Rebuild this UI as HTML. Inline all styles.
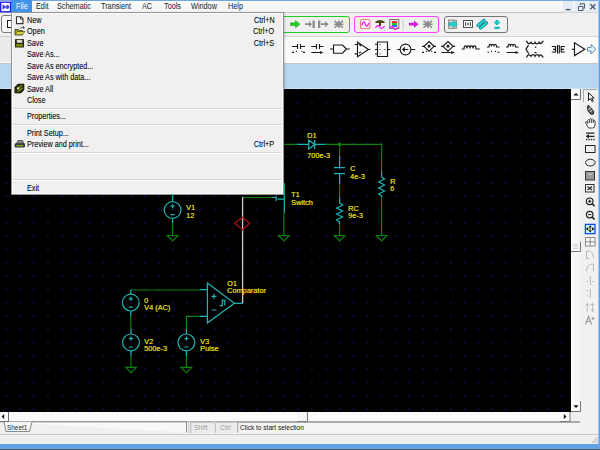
<!DOCTYPE html>
<html><head><meta charset="utf-8">
<style>
*{margin:0;padding:0;box-sizing:border-box}
html,body{width:600px;height:450px;overflow:hidden;background:#f0f0f0;font-family:"Liberation Sans",sans-serif}
.a{position:absolute}
.t{position:absolute;white-space:nowrap;transform-origin:0 0;transform:scaleX(.87);font-size:8.4px;line-height:10px;color:#1a1a1a}
#menubar{left:0;top:0;width:600px;height:13px;background:linear-gradient(#fafbfc,#f1f3f6);border-top:1px solid #74a7e0;border-bottom:1px solid #c4c4c4}
#tb1{left:0;top:13px;width:600px;height:23px;background:#f0f0f0}
#tb2{left:0;top:36px;width:598px;height:27px;background:#fbfbfb;border-top:1px solid #d4d4d4}
#band{left:0;top:63px;width:598px;height:26px;background:#b9d6f0;border-top:1px solid #c9c2bd;border-bottom:1px solid #cfe3f5}
#canvas{left:0;top:89px;width:571px;height:323px;background-color:#000;
 background-image:radial-gradient(circle,#0c0c3c 0.75px,transparent 1.2px);background-size:13.9px 13.3px;background-position:-0.65px -5.75px}
#vscroll{left:571px;top:89px;width:10px;height:323px;background:linear-gradient(90deg,#fff,#f8f8f8 25%,#f4f4f4)}
#palette{left:581px;top:89px;width:17px;height:345px;background:#f1f1f1}
#hscroll{left:0;top:412px;width:571px;height:10px;background:#fafafa}
#corner{left:571px;top:412px;width:10px;height:10px;background:#f0f0f0}
#tabbar{left:0;top:421px;width:580px;height:13px;background:#f0f0f0;border-top:1px solid #b0b0b0}
#status{left:0;top:434px;width:598px;height:10px;background:#efefef;border-top:1px solid #c9c9c9}
#taskbar{left:0;top:444px;width:600px;height:6px;background:#5fa2e6;border-bottom:1px solid #555}
#rframe{left:598px;top:0;width:2px;height:444px;background:linear-gradient(90deg,#a9cbee 50%,#5a9ee6 50%)}
.tbx{position:absolute;border-radius:3px;background:#f0f0f0}
#menu{left:10.5px;top:12px;width:273.5px;height:183px;background:#f0f0f0;border:1px solid rgba(0,0,0,.38);box-shadow:inset 0 0 0 1px #fbfbfb,1px 1px 2px rgba(0,0,0,.18)}
.m{font-size:8.6px;transform:scaleX(.84);color:#0a0a0a;text-shadow:.2px 0 0 rgba(0,0,0,.3)}
.sep{position:absolute;left:1px;right:1px;height:2px;border-top:1px solid #d7d7d7;border-bottom:1px solid #fff}
.l{position:absolute;white-space:nowrap;transform-origin:0 0;transform:scaleX(.92);font-size:8px;line-height:8px;color:#d8cc10;text-shadow:.35px 0 0 #d8cc10}
</style></head><body>
<div id="menubar" class="a">
 <svg class="a" style="left:0;top:-1px" width="12" height="14" viewBox="0 0 12 14"><rect x="0.7" y="2.2" width="9.8" height="9.6" fill="#fff" stroke="#1414e6" stroke-width="1.3"/><path d="M2.6 4L5.6 7L2.6 10Z" fill="#2a2af0"/><circle cx="7.3" cy="7" r="2" fill="#4848f0"/></svg>
 <div class="a" style="left:11px;top:-1px;width:20.5px;height:13px;background:#3f93e8;border-radius:1px"></div>
 <div class="t" style="left:15.5px;top:0px;color:#fff">File</div>
 <div class="t" style="left:36px;top:0px">Edit</div>
 <div class="t" style="left:57px;top:0px">Schematic</div>
 <div class="t" style="left:101px;top:0px">Transient</div>
 <div class="t" style="left:142px;top:0px">AC</div>
 <div class="t" style="left:164px;top:0px">Tools</div>
 <div class="t" style="left:191px;top:0px">Window</div>
 <div class="t" style="left:228px;top:0px">Help</div>
</div>
<div id="tb1" class="a"></div>
<div id="tb2" class="a"></div>
<div class="a" style="left:0;top:36px;width:12px;height:27px;background:#ebebeb;border-top:1px solid #cfcfcf;border-bottom:1.5px solid #fdfdfd"></div>
<div id="band" class="a"></div>
<div id="canvas" class="a"></div>
<div id="vscroll" class="a"></div>
<div id="palette" class="a"></div>
<div id="hscroll" class="a"></div>
<div id="corner" class="a"></div>
<div id="tabbar" class="a"></div>
<div id="status" class="a"></div>
<div id="taskbar" class="a"></div>
<div id="rframe" class="a"></div>

<!-- toolbar row1 boxes -->
<div class="tbx" style="left:1px;top:15px;width:40px;height:18px;border:1.5px solid #7a7a7a;background:#f8f8f8"></div>
<div class="tbx" style="left:200px;top:15.5px;width:150px;height:17.5px;border:1.4px solid #22cc22"></div>
<div class="tbx" style="left:354px;top:15.5px;width:85px;height:17.5px;border:1.4px solid #ff40ff"></div>
<div class="tbx" style="left:443.5px;top:15.5px;width:64.5px;height:17.5px;border:1.5px solid #767676"></div>



<svg class="a" style="left:0;top:0" width="600" height="100" viewBox="0 0 600 100">
<!-- left toolbar doc icon -->
<rect x="7.5" y="20.5" width="5" height="7" fill="#fff" stroke="#222" stroke-width="1"/>
<!-- green toolbar icons -->
<path d="M290.5 22.8H295.5V20.5L300 24.2L295.5 27.8V25.6H290.5Z" fill="#22d022" stroke="#119911" stroke-width=".5"/>
<g fill="#8c8c8c">
 <path d="M305 23.3H309V21L312 24.2L309 27.2V25H305Z"/><rect x="312.5" y="20.5" width="2.3" height="7.5"/>
 <rect x="318" y="20.5" width="2.3" height="7.5"/><path d="M321 23.3H325V21L328.5 24.2L325 27.2V25H321Z"/>
</g>
<path d="M334.5 20.8L343 27.6M343 20.8L334.5 27.6M338.8 20.5V28M334 24.2H343.5" stroke="#8c8c8c" stroke-width="1.6"/>
<!-- magenta toolbar -->
<rect x="360.5" y="19.5" width="9.5" height="9" rx="2" fill="#fff" stroke="#f07878" stroke-width="1.1"/>
<path d="M361.8 25.5C363 21 364.5 21 365.2 24S367.5 27.5 368.8 23" fill="none" stroke="#ff10ff" stroke-width="1.3"/>
<path d="M375.5 21.5Q380 18.5 384.5 21.5V23H381V26H379V23H375.5Z" fill="#4a4410"/>
<path d="M375.5 27.8C377 25 378.5 25 379.5 27S382.5 29 384.5 26" fill="none" stroke="#ff10ff" stroke-width="1.3"/>
<rect x="389.8" y="19.5" width="9" height="9" fill="#e8e8e8" stroke="#707070" stroke-width="1"/>
<rect x="392" y="21" width="5" height="2" fill="#f03030"/><rect x="392" y="23" width="5" height="2" fill="#30c030"/><rect x="392" y="25" width="5" height="2" fill="#3070f0"/>
<path d="M389.5 28.5C391 26 392.5 26 393.5 28S396.5 30 398.5 27" fill="none" stroke="#ff10ff" stroke-width="1.2"/>
<rect x="402.6" y="18.5" width=".9" height="12" fill="#c8c8c8"/>
<path d="M409 22.8H414V20.5L418.5 24.2L414 27.8V25.6H409Z" fill="#e010e0"/>
<path d="M423.5 20.8L432 27.6M432 20.8L423.5 27.6M427.8 20.5V28M423 24.2H432.5" stroke="#8c8c8c" stroke-width="1.6"/>
<!-- gray toolbar -->
<rect x="448.5" y="20" width="8" height="8.5" fill="#c8c8c8" stroke="#888" stroke-width=".8"/>
<path d="M449 22.8H453.5V20.5L457.5 24.2L453.5 27.8V25.6H449Z" fill="#10d8d8" stroke="#0a8a8a" stroke-width=".4"/>
<rect x="463.5" y="20.5" width="9" height="7" fill="#f4f4f4" stroke="#555" stroke-width="1"/>
<path d="M465.5 22V26M470.5 22V26" stroke="#333" stroke-width=".8"/><rect x="467.4" y="23.2" width="1.6" height="1.6" fill="#222"/>
<path d="M478 25.5L484 20.5M480.5 28L486.5 23" stroke="#0a6a6a" stroke-width="3.2" stroke-linecap="round"/><path d="M478 25.5L484 20.5M480.5 28L486.5 23" stroke="#18dede" stroke-width="2" stroke-linecap="round"/>
<path d="M494.5 22.5H499.5M497 20V25M494.5 27.8H499.5" stroke="#0a8a8a" stroke-width="2.2"/><path d="M494.5 22.5H499.5M497 20V25M494.5 27.8H499.5" stroke="#18d8d8" stroke-width="1.3"/>
<!-- MDI buttons -->
<g>
 <rect x="563" y="1" width="10.5" height="11.5" fill="#e3ebf4"/>
 <rect x="575" y="1" width="11.5" height="11.5" fill="#e3ebf4"/>
 <rect x="587.5" y="1" width="10.5" height="11.5" fill="#e3ebf4"/>
 <path d="M566 9.6H570.5" stroke="#4d5b6e" stroke-width="1.4"/>
 <path d="M578.5 6.5H583V10.5H578.5ZM580 5V3.8H584.5V8.2H583.3" fill="none" stroke="#4d5b6e" stroke-width="1"/>
 <path d="M590.3 4.3L595.3 9.3M595.3 4.3L590.3 9.3" stroke="#4d5b6e" stroke-width="1.3"/>
</g>
<!-- row 2 symbols -->
<g fill="none" stroke="#1a1a1a" stroke-width="1.15">
 <!-- 1 -->
 <path d="M292 46.5H297.5M300.5 46.5H305M297.5 44V49M300.5 44V49M292 52.3H294M296 51.5L297 51M301.5 51L302.5 51.5M303 52.3H305"/>
 <!-- 2 -->
 <path d="M311.3 46.5H316.5M319.5 46.5H323.5M316.5 44V49M319.5 44V49M311.5 52.5H322"/>
 <path d="M320 51L323.5 52.5L320 54Z" fill="#222" stroke="none"/>
 <!-- 3 gate -->
 <path d="M330 49H333.5M333.5 45H342.5L346.5 49L342.5 53.2H333.5ZM346.5 49H349.8"/>
 <!-- 4 opamp -->
 <path d="M357.5 42V56.7L368.5 49.5ZM354.7 44.5H357.5M354.7 53.8H357.5M368.5 49.5H370.4M359 44L361 46M359 53L361 52"/>
 <!-- 5 IC -->
 <path d="M377.5 42H387.5V56.5H377.5ZM375 44.2H377.5M375 49.5H377.5M375 54H377.5M387.5 49.5H390.3"/>
 <path d="M380 44V45M380 49V50M380 53.5V54.5M385 49V50" stroke="#557" stroke-width="1.2"/>
 <!-- 6 current source -->
 <circle cx="405.5" cy="49.5" r="5.4"/>
 <path d="M397.3 49.5H400.1M410.9 49.5H415.3M402.8 49.5H408.3M404.8 47.5L402.8 49.5L404.8 51.5"/>
 <!-- 7 diamond dashed -->
 <path d="M429 41.5L434 46.3L429 51.1L424 46.3ZM422 46.3H424M434 46.3H436M422 52.3H424M426 51.5L427 51M431 51L432 51.5M434 52.3H436"/>
 <circle cx="429" cy="46.3" r=".9" fill="#222"/>
 <!-- 8 diamond arrow -->
 <path d="M448 41.5L453 46.3L448 51.1L443 46.3ZM441 46.3H443M453 46.3H455M441.5 52.5H452"/>
 <circle cx="448" cy="46.3" r=".9" fill="#222"/>
 <path d="M451 51L455 52.5L451 54Z" fill="#222" stroke="none"/>
 <!-- 9 inductor -->
 <path d="M461.7 49H464C464 45 467 45 467 48.5C467 45 470 45 470 48.5C470 45 473 45 473 48.5C473 45 476 45 476 48.5V49H479.8"/>
 <!-- 10 inductor dashed -->
 <path d="M487 47H489C489 43.5 491.5 43.5 491.5 46.5C491.5 43.5 494 43.5 494 46.5C494 43.5 496.5 43.5 496.5 46.5V47H499.5M487.5 52.2H489M491 51.6L492 51.2M495 51.2L496 51.6M497.5 52.2H499.5"/>
 <!-- 11 inductor arrow -->
 <path d="M506 47H508C508 43.5 510.5 43.5 510.5 46.5C510.5 43.5 513 43.5 513 46.5C513 43.5 515.5 43.5 515.5 46.5V47H518.5M506.5 52.5H516"/>
 <path d="M515.5 51L519 52.5L515.5 54Z" fill="#222" stroke="none"/>
 <!-- 12 transformer -->
 <path d="M526.5 40.8C527.5 44 529.5 44.5 531 42.3C532 44.5 534 44.5 535 42.3C536 44.5 538 44.5 539 42.3C540 44.5 542 43.5 543.2 40.8M526.5 57.6C527.5 54.5 529.5 54 531 56.2C532 54 534 54 535 56.2C536 54 538 54 539 56.2C540 54 542 55 543.2 57.6M528.5 45.2L526 49.2L528.8 53.8M534.8 47H536.3M534.5 52.5H536.5" stroke-width="1.25"/>
 <!-- 13 crystal -->
 <path d="M551.8 46.5H555.5V52H551.8M557.5 45V53.5M559.3 45V53.5M564.8 46.5H561.2V52H564.8M553 49.3H555.5M561.2 49.3H564"/>
 <!-- 14 buffer -->
 <path d="M572 49.3H574.5M574.5 42.8V55.6L584.8 49.3Z"/>
 <path d="M587.5 47.5H591V44.5L596 49.3L591 54V51H587.5Z" fill="#e0f4ff" stroke="#5080a0" stroke-width=".9"/>
</g>
</svg>

<svg class="a" style="left:0;top:0" width="600" height="450" viewBox="0 0 600 450">
<g fill="none" stroke-width="1.2">
 <!-- green wires -->
 <g stroke="#0a820c">
  <path d="M200 144.4H297.3M325.3 144.4H381.6V171M339.6 144.4V156M339.6 184V197M339.6 224V235.5M381.6 197V235.5"/>
  <path d="M172.6 223V235.5M283.8 213V235.5M243 197.5H272"/>
  <path d="M130.8 290H200M130.8 316V329M131 356V367.4M186.4 316.3H200M186.4 316.3V329M186.4 356V367.4"/>
  <!-- grounds -->
  <path d="M167.3 235.5H177.9L172.6 240.8ZM334.3 235.5H344.9L339.6 240.8ZM376.3 235.5H386.9L381.6 240.8ZM278.5 235.5H289.1L283.8 240.8ZM125.7 367.4H136.3L131 372.7ZM181.1 367.4H191.7L186.4 372.7Z"/>
 </g>
 <circle cx="339.6" cy="144.4" r="1.8" fill="#0a820c" stroke="none"/>
 <!-- cyan components -->
 <g stroke="#1fb4b4">
  <!-- diode -->
  <path d="M297.3 144.4H308.7M314.7 144.4H325.3M308.7 140L314.7 144.4L308.7 149ZM314.7 140V149"/>
  <!-- capacitor -->
  <path d="M339.6 156V167.6M334 167.6H345M334 173.7H345M339.6 173.7V184"/>
  <!-- RC resistor -->
  <path d="M339.6 197V203L342.6 205L336.6 208L342.6 211L336.6 214L342.6 217L336.6 220L339.6 222V224"/>
  <!-- R resistor -->
  <path d="M381.6 171V177L384.6 179L378.6 182L384.6 185L378.6 188L384.6 191L378.6 194L381.6 196V197"/>
  <!-- V1 -->
  <path d="M172.6 195V201.6M172.6 218.4V223"/>
  <circle cx="172.6" cy="210" r="8.4"/>
  <path d="M170.6 206.2H174.6M172.6 204.2V208.2M170.6 214.6H174.6"/>
  <!-- V4 -->
  <circle cx="130.8" cy="302.6" r="8.4"/>
  <path d="M130.8 290V294.2M130.8 311V316M128.8 298.8H132.8M130.8 296.8V300.8M128.8 307.2H132.8"/>
  <!-- V2 -->
  <circle cx="131" cy="342.4" r="8.4"/>
  <path d="M131 329V334M131 350.8V356M129 338.6H133M131 336.6V340.6M129 347H133"/>
  <!-- V3 -->
  <circle cx="186.4" cy="342.4" r="8.4"/>
  <path d="M186.4 329V334M186.4 350.8V356M184.4 338.6H188.4M186.4 336.6V340.6M184.4 347H188.4"/>
  <!-- comparator -->
  <path d="M207.4 283L234.4 303.3L207.4 323ZM200 289.7H207.4M200 316.3H207.4M234.4 303.3H242.6"/>
  <path d="M211.4 296.3H216.4M213.9 293.8V298.8M211.4 310H216.4M219.7 305.6H222.3V300.2H224.8V305.6"/>
  <!-- T1 -->
  <path d="M272 197.5H276.2M276.2 195.5V201M277.5 199.2H284.3M284.3 183V213"/>
 </g>
 <path d="M242.6 197V303.3" stroke="#cccccc" stroke-width="1.3"/>
 <path d="M242.4 217.2L249.7 223.3L242.4 229.8L234.8 223.3Z" stroke="#b01414" stroke-width="1.2"/>
</g>
</svg>
<div class="l" style="left:307.3px;top:132px">D1</div>
<div class="l" style="left:307.3px;top:152px">700e-3</div>
<div class="l" style="left:349.5px;top:165px">C</div>
<div class="l" style="left:349.5px;top:172.5px">4e-3</div>
<div class="l" style="left:389.5px;top:177.5px">R</div>
<div class="l" style="left:389.5px;top:185px">6</div>
<div class="l" style="left:348px;top:204.5px">RC</div>
<div class="l" style="left:348px;top:212px">9e-3</div>
<div class="l" style="left:290.5px;top:190.5px">T1</div>
<div class="l" style="left:290.5px;top:198.5px">Switch</div>
<div class="l" style="left:185.5px;top:204px">V1</div>
<div class="l" style="left:185.5px;top:211.5px">12</div>
<div class="l" style="left:227.2px;top:280px">O1</div>
<div class="l" style="left:227.2px;top:287px">Comparator</div>
<div class="l" style="left:144px;top:296.5px">0</div>
<div class="l" style="left:144px;top:304px">V4 (AC)</div>
<div class="l" style="left:144px;top:337.5px">V2</div>
<div class="l" style="left:144px;top:345px">500e-3</div>
<div class="l" style="left:200px;top:337.5px">V3</div>
<div class="l" style="left:200px;top:345px">Pulse</div>


<!-- scrollbars & palette -->
<svg class="a" style="left:0;top:85px" width="600" height="365" viewBox="0 85 600 365">
 <!-- vscroll buttons -->
 <rect x="571" y="89" width="10" height="10" fill="#fcfcfc"/>
 <path d="M580.5 89V99.5H571" fill="none" stroke="#707070" stroke-width="1"/>
 <path d="M573.3 95.6L576 92.9L578.7 95.6Z" fill="#111"/>
 <rect x="571" y="401.5" width="10" height="10" fill="#fcfcfc"/>
 <path d="M580.5 401.5V411.5H571" fill="none" stroke="#707070" stroke-width="1"/>
 <path d="M573.3 405.3L576 408L578.7 405.3Z" fill="#111"/>
 <!-- vscroll thumb -->
 <rect x="571" y="241.5" width="9.5" height="10" fill="#f6f6f6"/>
 <path d="M580.5 241.5V251.5H571" fill="none" stroke="#777" stroke-width="1"/>
 <path d="M573 244.5H578M573 246.5H578M573 248.5H578" stroke="#c8c8c8" stroke-width=".8"/>
 <!-- hscroll buttons -->
 <rect x="0" y="412" width="8" height="9" fill="#fcfcfc"/>
 <path d="M8.5 412V421.5H0" fill="none" stroke="#707070" stroke-width="1"/>
 <path d="M4.2 414L1.6 416.6L4.2 419.2Z" fill="#111"/>
 <rect x="560" y="412" width="10" height="9" fill="#fcfcfc"/>
 <path d="M570 412V421.5H560" fill="none" stroke="#707070" stroke-width="1"/>
 <path d="M563.8 414L566.4 416.6L563.8 419.2Z" fill="#111"/>
 <!-- hscroll thumb -->
 <rect x="297.5" y="412" width="10" height="9" fill="#f6f6f6"/>
 <path d="M307.5 412V421.5H297.5" fill="none" stroke="#777" stroke-width="1"/>
 <!-- palette pressed border -->
 <path d="M583.5 102V89.5H597" fill="none" stroke="#a8a8a8" stroke-width="1"/>
 <g fill="none" stroke="#222" stroke-width="1">
  <!-- arrow cursor -->
  <path d="M588.5 92.8V100.5L590.5 98.5L592 101.5L593.2 101L591.8 98H594.2Z"/>
  <!-- pen -->
  <path d="M588.2 105.2L591.8 108.6Q594.5 111.5 593.6 113.8Q592.3 115.2 589.8 113.4Q587.5 111 587.4 107.2Z" fill="#555" stroke="#222" stroke-width=".9"/>
  <path d="M588.5 109.5L591 107.8M589.8 111.8L592.6 110" stroke="#f0f0f0" stroke-width="1"/>
  <!-- hand -->
  <path d="M588.6 128L585.6 122.8Q585.2 121.6 586.4 121.6L587.8 123.5V120.4Q588.7 118.6 589.6 120.4V119.2Q590.5 117.4 591.4 119.2V119.7Q592.3 117.9 593.2 119.7V120.9Q594.1 119.1 595 120.9V125Q595 128 592.5 128ZM589.6 120.4V123M591.4 119.7V123M593.2 120.9V123" fill="#fff" stroke="#222" stroke-width=".85"/>
  <!-- wire tool -->
  <path d="M586 133.2H594.5M588 136.3H594.5" stroke-width="1.2"/><path d="M586 139.5H595" stroke-width="1.4" stroke-dasharray="1.3 1.1"/>
  <path d="M588.5 134.8L586.3 136.3L588.5 137.8Z" fill="#222"/>
  <!-- rect -->
  <rect x="585.5" y="145.5" width="9.5" height="7"/>
  <!-- ellipse -->
  <ellipse cx="590.3" cy="162.6" rx="4.8" ry="3.4"/>
  <!-- picture box -->
  <rect x="585.5" y="171.5" width="9" height="8.5" fill="#9a9a9a" stroke="#333"/>
  <path d="M588.5 175L590 173.5L591.5 175" stroke="#fff" stroke-width=".8"/>
  <!-- X box -->
  <rect x="585.5" y="184.5" width="8.5" height="7.5" fill="#f0f0f0" stroke="#333"/>
  <path d="M587.5 186.5L592 190M592 186.5L587.5 190" stroke-width="1.1"/>
  <!-- zoom + -->
  <circle cx="589.7" cy="201.3" r="3.3" stroke-width="1.2"/>
  <path d="M592.2 203.8L594.6 206.2" stroke-width="1.6"/>
  <path d="M588 201.3H591.4M589.7 199.6V203" stroke-width="1"/>
  <!-- zoom - -->
  <circle cx="589.7" cy="214.6" r="3.3" stroke-width="1.2"/>
  <path d="M592.2 217.1L594.6 219.5" stroke-width="1.6"/>
  <path d="M588 214.6H591.4" stroke-width="1"/>
 </g>
 <!-- fit (highlighted) -->
 <rect x="585.4" y="224.4" width="9.6" height="9.2" fill="#c0ffff" stroke="#1244f2" stroke-width="1.3"/>
 <rect x="587.5" y="226.3" width="5.4" height="5.2" fill="#f4fdfd"/>
 <path d="M588.4 227.6L590.2 225.2L592 227.6ZM588.4 230.2L590.2 232.6L592 230.2ZM588.3 227.1L585.9 228.9L588.3 230.7ZM592.1 227.1L594.5 228.9L592.1 230.7Z" fill="#111"/>
 <path d="M589.2 228.9H591.2M590.2 227.9V229.9" stroke="#442" stroke-width=".8"/>
 <!-- grid -->
 <rect x="585.5" y="237.5" width="9.5" height="8.5" fill="#fafafa" stroke="#8a8a8a" stroke-width="1"/>
 <path d="M590.2 237.5V246M585.5 241.8H595" stroke="#8a8a8a" stroke-width="1"/>
 <g fill="none" stroke="#b8b8b8" stroke-width="1">
  <path d="M586.5 251H588.5C591.5 251 593.5 253.5 593.5 258.5M586.5 251V258.5H589"/>
  <path d="M586.5 271.5C586.5 267 589 264 593.5 264V271.5"/>
  <path d="M590.3 276V285M586.5 281.5H588M592.5 281.5H594"/>
  <path d="M590.3 289V298M586.5 290.5H588M586.5 296H588"/>
  <path d="M587.3 303.5V311.5M585.5 305.5L587.3 303.5L589.1 305.5M592.5 303.5V311.5M590.7 305.5L592.5 303.5L594.3 305.5M590.7 309.5L592.5 311.5L594.3 309.5"/>
 </g>
 <path d="M585.5 324.5L588.5 316.5L591.5 324.5M586.8 321.5H590.2" fill="none" stroke="#9a9a9a" stroke-width="1.2"/>
 <path d="M591.5 318.5H594.5M593 317V320" stroke="#9a9a9a" stroke-width="1"/>
 <!-- tab bar -->
 <path d="M0 421.9H4L6 431.5H29.5L32 421.9H186.5V432.5" fill="#f8f8f8" stroke="#8a8a8a" stroke-width="1"/>
 <path d="M188.5 422V433M190 422V433" stroke="#d0d0d0" stroke-width=".8"/>
 <rect x="190.8" y="422.3" width="23.2" height="10.5" fill="#ececec"/>
 <path d="M190.8 432.8V422.3H214" fill="none" stroke="#b8b8b8" stroke-width="1"/>
 <rect x="215.3" y="422.3" width="21.5" height="10.5" fill="#ececec"/>
 <path d="M215.3 432.8V422.3H236.8" fill="none" stroke="#b8b8b8" stroke-width="1"/>
 <rect x="237.8" y="422.3" width="342" height="10.5" fill="#f4f4f4"/>
 <path d="M237.8 432.8V422.3H580" fill="none" stroke="#9a9a9a" stroke-width="1"/>
 <!-- resize grip -->
 <path d="M592 443L598 437M594.5 443L598 439.5M597 443L598 442" stroke="#a8a8a8" stroke-width=".9"/>
</svg>
<div class="t" style="left:7px;top:422.5px;font-size:8px;transform:scaleX(.8)">Sheet1</div>
<div class="t" style="left:193.5px;top:422.5px;font-size:8px;color:#a0a0a0;transform:scaleX(.85)">Shift</div>
<div class="t" style="left:219.5px;top:422.5px;font-size:8px;color:#a0a0a0;transform:scaleX(.85)">Ctrl</div>
<div class="t" style="left:240px;top:422.5px;font-size:8px;color:#111;transform:scaleX(.82)">Click to start selection</div>

<div id="menu" class="a">
 <svg class="a" style="left:-11px;top:-12px" width="40" height="190" viewBox="0 0 40 190">
  <path d="M15.5 15.8H20L22 17.8V22.6H15.5Z" fill="#fff" stroke="#333" stroke-width="1.1"/>
  <path d="M19.5 16V18.3H21.8" fill="none" stroke="#333" stroke-width=".8"/>
  <path d="M14 28.5H17.5L18.5 29.5H21.5V33.8H14Z" fill="#a8a020" stroke="#3a3810" stroke-width=".8"/>
  <path d="M14 33.8L16 30.5H24L21.5 33.8Z" fill="#d8d040" stroke="#4a4810" stroke-width=".7"/>
  <path d="M19.5 27.5Q21 25.3 23 26.5M22 25.6L23.4 26.6L22.3 27.8" fill="none" stroke="#222" stroke-width=".8"/>
  <rect x="14" y="38" width="9" height="8.5" fill="#2a2a08" rx=".5"/>
  <rect x="15.8" y="38.8" width="5.5" height="3" fill="#d8d8c8"/>
  <rect x="15.2" y="43" width="6.5" height="2.6" fill="#7a8a10"/>
  <path d="M13.8 86L17 83H23V89L20 92H13.8Z" fill="#2a3008" stroke="#151505" stroke-width=".6"/>
  <path d="M16 88L21 84.5M16.5 90.5L21.5 87" stroke="#8a9a18" stroke-width="1.3"/>
  <circle cx="17.2" cy="87.3" r="1.1" fill="#e8e8e8"/>
  <path d="M15.5 142.5L17 139.5H21.5L23 142.5Z" fill="#888" stroke="#333" stroke-width=".7"/>
  <rect x="13.7" y="142.3" width="10.3" height="4.2" rx="1.2" fill="#3a3a3a"/>
  <rect x="15.2" y="144.2" width="7" height="1" fill="#9ad020"/>
 </svg>
 <div class="t m" style="left:15px;top:2px">New</div><div class="t m" style="left:auto;right:8.5px;transform-origin:100% 0;top:2px">Ctrl+N</div>
 <div class="t m" style="left:15px;top:13.3px">Open</div><div class="t m" style="left:auto;right:8.5px;transform-origin:100% 0;top:13.3px">Ctrl+O</div>
 <div class="t m" style="left:15px;top:24.8px">Save</div><div class="t m" style="left:auto;right:8.5px;transform-origin:100% 0;top:24.8px">Ctrl+S</div>
 <div class="t m" style="left:15px;top:36.2px">Save As...</div>
 <div class="t m" style="left:15px;top:47.6px">Save As encrypted...</div>
 <div class="t m" style="left:15px;top:59px">Save As with data...</div>
 <div class="t m" style="left:15px;top:70.5px">Save All</div>
 <div class="t m" style="left:15px;top:82px">Close</div>
 <div class="sep" style="top:95px"></div>
 <div class="t m" style="left:15px;top:98px">Properties...</div>
 <div class="sep" style="top:111px"></div>
 <div class="t m" style="left:15px;top:114.5px">Print Setup...</div>
 <div class="t m" style="left:15px;top:126px">Preview and print...</div><div class="t m" style="left:auto;right:8.5px;transform-origin:100% 0;top:126px">Ctrl+P</div>
 <div class="sep" style="top:139px"></div>
 <div class="sep" style="top:166px"></div>
 <div class="t m" style="left:15px;top:169.5px">Exit</div>
</div>
</body></html>
